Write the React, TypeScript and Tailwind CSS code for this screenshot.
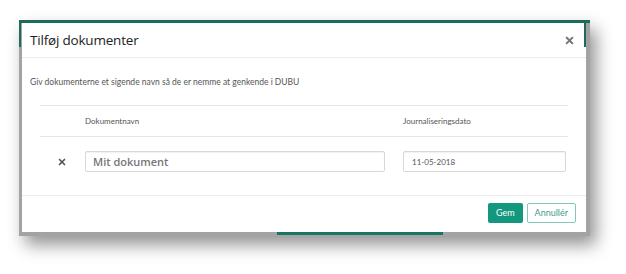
import { X } from "lucide-react";

function CloseGlyph({ className }: { className?: string }) {
  return (
    <svg viewBox="0 0 10 10" className={className} aria-hidden>
      <path d="M2 2 L8 8 M8 2 L2 8" stroke="currentColor" strokeWidth="2.2" strokeLinecap="square" />
    </svg>
  );
}

export default function App() {
  return (
    <div className="w-[626px] h-[274px] bg-white pt-[20px] pl-[19px] font-['Lato','Open_Sans',sans-serif]">
      <div className="relative w-[571px] h-[216px] bg-[#a3a3a3] border-t-[3px] border-[#1c6b5b] shadow-[6px_9px_16px_rgba(0,0,0,0.42)]">
        {/* page behind the backdrop */}
        <div className="absolute left-0 top-0 w-[2px] h-[24px] bg-[#1c6b5b]" />
        <div className="absolute right-[4px] top-0 w-[2px] h-[24px] bg-[#1c6b5b]" />
        <div className="absolute left-[258px] bottom-[1px] w-[166px] h-[3px] bg-[#1a7565]" />

        <div className="ml-[3px] w-[564px] h-[209px] bg-white flex flex-col">
          <div className="h-[35px] flex items-center justify-between pl-[8px] pr-[12px] border-b border-[#ececec]">
            <h1 className="text-[13.5px] text-[#222] font-['Open_Sans',sans-serif] tracking-[-0.2px]">Tilføj dokumenter</h1>
            <CloseGlyph className="w-[9px] h-[9px] text-[#777]" />
          </div>

          <div className="px-[18px] pt-[18px]">
            <p className="text-[8.5px] text-[#555] -ml-[10px]">
              Giv dokumenterne et sigende navn så de er nemme at genkende i DUBU
            </p>
            <div className="mt-[16px] border-t border-[#e6e6e6]" />
            <div className="h-[31px] flex items-center text-[8px] text-[#555] border-b border-[#e6e6e6]">
              <span className="w-[45px]" />
              <span className="w-[318px]">Dokumentnavn</span>
              <span>Journaliseringsdato</span>
            </div>
            <div className="h-[50px] flex items-center">
              <span className="w-[45px] flex justify-center pr-[2px]">
                <X className="w-[10px] h-[10px] text-[#555]" strokeWidth={4} />
              </span>
              <div className="w-[300px] h-[21px] border border-[#d8d8d8] rounded-[2px] flex items-center px-[7px] text-[11px] text-[#777] font-semibold font-['Open_Sans',sans-serif] shadow-[inset_0_1px_1px_rgba(0,0,0,0.06)]">
                Mit dokument
              </div>
              <div className="ml-[18px] w-[163px] h-[21px] border border-[#d8d8d8] rounded-[2px] flex items-center px-[8px] text-[8px] text-[#555] shadow-[inset_0_1px_1px_rgba(0,0,0,0.06)]">
                11-05-2018
              </div>
            </div>
          </div>

          <div className="mt-auto h-[37px] border-t border-[#ececec] flex items-center justify-end gap-[4px] pr-[10px] pb-[2px]">
            <button className="h-[20px] px-[8px] rounded-[2px] bg-[#13977f] text-white text-[9px]">Gem</button>
            <button className="h-[20px] px-[7px] rounded-[2px] border border-[#7fcabc] text-[#3f9c8a] text-[9px]">Annullér</button>
          </div>
        </div>
      </div>
    </div>
  );
}
